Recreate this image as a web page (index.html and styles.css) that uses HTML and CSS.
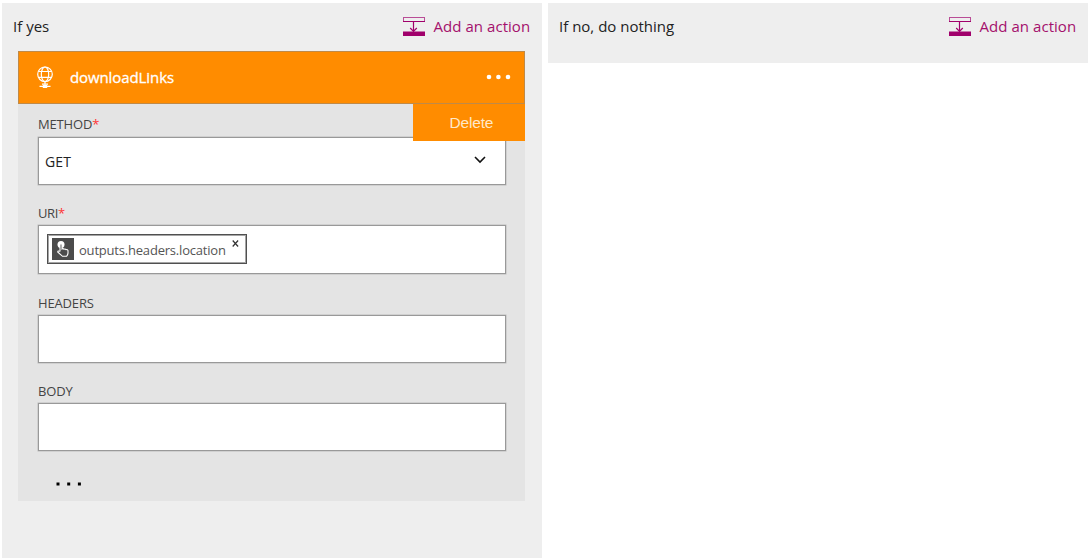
FILE: index.html
```html
<!DOCTYPE html>
<html lang="en">
<head>
<meta charset="utf-8">
<title>Condition branches</title>
<link rel="stylesheet" href="styles.css">
</head>
<body>
<svg class="symbols" width="0" height="0">
  <symbol id="insert" viewBox="0 0 22 19">
    <path class="soft" d="M0 0h22v5H0zM1 1v3h20V1z" fill-rule="evenodd"/>
    <path class="mid" d="M0 0h22v1H0zM0 0h1v5H0zM21 0h1v5h-1zM0 14h22v1H0z"/>
    <path d="M0 4h22v1H0zM0 15h22v4H0z"/>
    <path class="line" d="M10.5 5v9.5M7.2 11l3.3 3.3 3.3-3.3"/>
  </symbol>
</svg>
<main class="branches">
  <section class="branch branch-yes">
    <header class="branch-head">
      <span class="branch-title title-yes">If yes</span>
      <a class="add"><svg class="add-icon"><use href="#insert"/></svg><span class="add-text">Add an action</span></a>
    </header>
    <article class="card">
      <div class="card-head">
        <svg class="globe" viewBox="0 0 18 22">
          <circle cx="9" cy="7.3" r="7.3"/>
          <ellipse cx="9" cy="7.3" rx="3.7" ry="7.3"/>
          <path d="M2.5 4.5h13M2.5 10.3h13M9 14.5v3M3.5 19.3h11"/>
          <path class="base" d="M6 16.5h6v1.3H6zM6.8 18h4.4v3H6.8z"/>
        </svg>
        <h1 class="card-title">downloadLinks</h1>
        <svg class="dots" viewBox="0 0 26 6"><circle cx="3" cy="3" r="2.3"/><circle cx="12.4" cy="3" r="2.3"/><circle cx="22" cy="3" r="2.3"/></svg>
        <div class="menu"><span>Delete</span></div>
      </div>
      <div class="card-body">
        <div class="field field-method">
          <label class="label label-method">METHOD<b>*</b></label>
          <div class="box select"><span>GET</span><svg class="chevron" viewBox="0 0 12 8"><path d="M1 1l5 5 5-5"/></svg></div>
        </div>
        <div class="field field-uri">
          <label class="label label-uri">URI<b>*</b></label>
          <div class="box box-uri">
            <span class="token">
              <svg class="token-icon" viewBox="0 0 22 22">
                <circle class="tap" cx="9" cy="6.5" r="3.5"/>
                <path class="hand" d="M8 13V6.3q1-1.3 2 0V11q1.2-.8 2 .3 1.3-.7 2 .4 1.7-.5 2 .9v2.5q-.2 2-1.5 3.2h-4L5.7 14q.2-1.6 1.6-.8z"/>
              </svg>
              <span class="token-text">outputs.headers.location</span>
              <svg class="close" viewBox="0 0 7 7"><path d="M.7.5l5.4 6M6.1.5l-5.4 6"/></svg>
            </span>
          </div>
        </div>
        <div class="field field-headers">
          <label class="label label-headers">HEADERS</label>
          <div class="box"></div>
        </div>
        <div class="field field-body">
          <label class="label label-body">BODY</label>
          <div class="box"></div>
        </div>
        <svg class="more" viewBox="0 0 26 4"><path d="M.5 .5h3v3h-3zM11.2 .5h3v3h-3zM21.9 .5h3v3h-3z"/></svg>
      </div>
    </article>
  </section>
  <section class="branch branch-no">
    <header class="branch-head">
      <span class="branch-title title-no">If no, do nothing</span>
      <a class="add"><svg class="add-icon"><use href="#insert"/></svg><span class="add-text">Add an action</span></a>
    </header>
  </section>
</main>
</body>
</html>
```
FILE: styles.css
```css
* { box-sizing: border-box; }
body {
  margin: 0;
  background: #fff;
  color: #222;
  font-family: "Open Sans", "Noto Sans", sans-serif;
  font-size: 15px;
}
svg { display: block; flex: none; }
.symbols { position: absolute; }
.branches {
  display: flex;
  align-items: flex-start;
  gap: 6px;
  padding: 3px 0 0 2px;
}
.branch { width: 540px; flex: none; background: #eee; }
.branch-yes { height: 555px; padding-bottom: 57px; }
.branch-no { height: 60px; }
.branch-head {
  display: flex;
  justify-content: space-between;
  height: 48px;
  padding: 13px 11px 0 11px;
  line-height: 20px;
}
.add { display: flex; gap: 8.5px; width: 128px; color: #a4106c; white-space: nowrap; }
.add-text { letter-spacing: .05px; }
.add-icon { width: 22px; height: 19px; margin-top: 1px; fill: #a0006b; }
.soft { opacity: .35; }
.mid { opacity: .5; }
.line { fill: none; stroke: #a0006b; stroke-width: 1.2; }

.card {
  width: 507px;
  height: 450px;
  margin-left: 16.4px;
  background: #e4e4e4;
}
.card-head {
  position: relative;
  display: flex;
  align-items: center;
  height: 53px;
  padding: 0 12px 0 16.5px;
  border: 1px solid #bf8a48;
  background: #ff8c00;
  color: #fff;
}
.globe { width: 18px; height: 22px; fill: none; stroke: #fff; stroke-width: 1.2; overflow: visible; }
.globe .base { fill: #fff; stroke: none; }
.card-title {
  flex: 1;
  margin: 0 0 2px 16px;
  font-size: 15px;
  font-weight: 400;
  letter-spacing: -.08px;
  -webkit-text-stroke: .3px #fff;
}
.dots { width: 26px; height: 6px; margin-bottom: 2px; fill: #fff; }
.menu {
  position: absolute;
  top: 52px;
  right: -1px;
  width: 112px;
  height: 37px;
  padding-left: 36px;
  background: #ff8c00;
  color: #ffe8c8;
  font: 15.5px/37px "Liberation Sans", Arial, sans-serif;
  letter-spacing: -.15px;
}
.card-body { padding: 12px 19.6px 0; }
.field { display: flex; flex-direction: column; gap: 4px; margin-bottom: 20px; }
.field-method { gap: 5px; }
.field-uri { margin-bottom: 21px; }
.field-body { margin-bottom: 0; }
.label {
  height: 16px;
  font-size: 13px;
  line-height: 16px;
  letter-spacing: -.15px;
  color: #444;
  white-space: nowrap;
}
.label-uri { letter-spacing: -.4px; }
.label b { color: #f33; font-weight: 400; }
.box {
  height: 48px;
  border: 1px solid #999;
  background: #fff;
  box-shadow: 0 0 0 .5px #bbb;
}
.box-uri { height: 49px; padding: 8px; }
.select {
  display: flex;
  align-items: center;
  justify-content: space-between;
  padding: 0 18.5px 0 6px;
  font-size: 14px;
  letter-spacing: .2px;
}
.chevron { width: 12px; height: 8px; margin-bottom: 3px; fill: none; stroke: #111; stroke-width: 1.6; }
.token {
  display: flex;
  align-items: center;
  width: 200px;
  height: 30px;
  padding-left: 4px;
  border: 1px solid #505050;
  box-shadow: inset 0 0 0 1px #a5a5a5;
  font-size: 13px;
  letter-spacing: -.2px;
  color: #555;
  white-space: nowrap;
}
.token-icon { width: 22px; height: 22px; background: #4b4b4b; }
.tap { fill: #fff; }
.hand { fill: #4b4b4b; stroke: #fff; stroke-width: 1.1; }
.token-text { width: 147px; margin: 1px 0 0 5px; }
.close { width: 7px; height: 7px; margin: 0 0 12px 6px; fill: none; stroke: #333; stroke-width: 1.2; }
.more { width: 26px; height: 4px; margin: 31px 0 0 18.5px; fill: #000; }
```
